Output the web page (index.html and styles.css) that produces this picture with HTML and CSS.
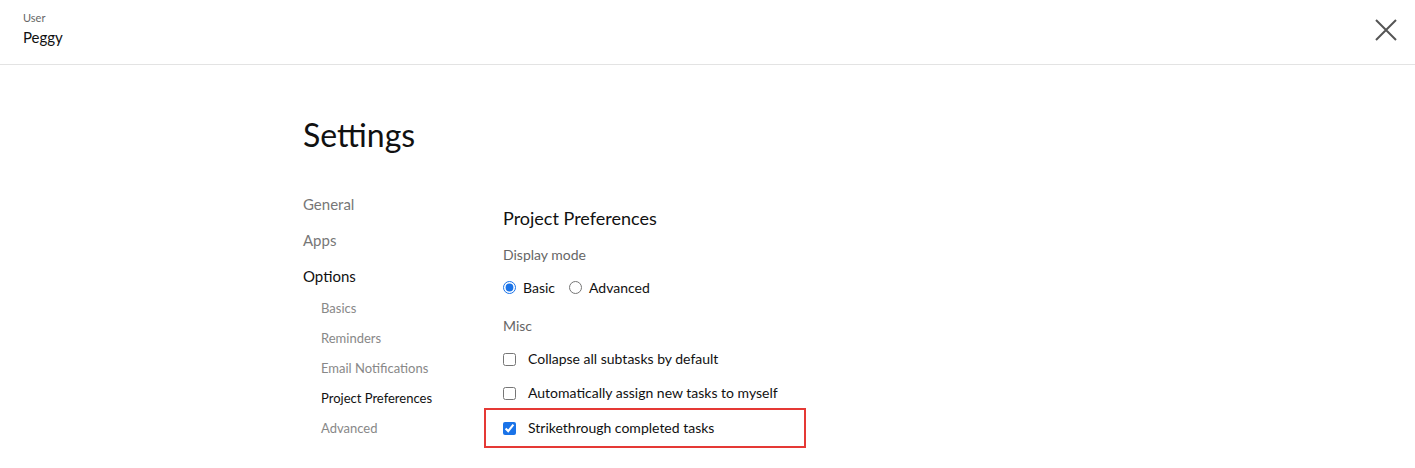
FILE: index.html
```html
<!DOCTYPE html>
<html>
<head>
<meta charset="utf-8">
<link rel="stylesheet" href="styles.css">
</head>
<body>
<header class="topbar">
  <div class="user">
    <div class="user-label">User</div>
    <div class="user-name">Peggy</div>
  </div>
  <button class="close" aria-label="Close">
    <svg width="24" height="24" viewBox="0 0 24 24"><path d="M2 2 L22 22 M22 2 L2 22" stroke="#555" stroke-width="2" fill="none"/></svg>
  </button>
</header>
<main class="page">
  <h1 class="title">Settings</h1>
  <div class="layout">
    <nav class="nav">
      <a class="nav-item">General</a>
      <a class="nav-item">Apps</a>
      <a class="nav-item active">Options</a>
      <div class="subnav">
        <a class="sub-item">Basics</a>
        <a class="sub-item">Reminders</a>
        <a class="sub-item">Email Notifications</a>
        <a class="sub-item active">Project Preferences</a>
        <a class="sub-item">Advanced</a>
      </div>
    </nav>
    <section class="content">
      <h2 class="section-title">Project Preferences</h2>
      <div class="label">Display mode</div>
      <div class="radios">
        <label class="radio"><input type="radio" name="mode" checked> Basic</label>
        <label class="radio"><input type="radio" name="mode"> Advanced</label>
      </div>
      <div class="label misc">Misc</div>
      <label class="check"><input type="checkbox"> Collapse all subtasks by default</label>
      <label class="check"><input type="checkbox"> Automatically assign new tasks to myself</label>
      <label class="check highlight"><input type="checkbox" checked> Strikethrough completed tasks</label>
    </section>
  </div>
</main>
</body>
</html>
```
FILE: styles.css
```css
* { box-sizing: border-box; }
body {
  margin: 0;
  font-family: Lato, "Noto Sans", sans-serif;
  color: #1a1a1a;
  background: #fff;
}
.topbar {
  height: 65px;
  border-bottom: 1px solid #e3e3e3;
  display: flex;
  justify-content: space-between;
  align-items: flex-start;
  padding: 11px 17px 0 23px;
}
.user-label { font-size: 11px; color: #666; line-height: 14px; }
.user-name { font-size: 15px; line-height: 20px; margin-top: 2px; color: #111; }
.close {
  border: 0; background: none; padding: 0; margin-top: 7px; cursor: pointer;
}
.page { padding-left: 303px; }
.title {
  font-size: 32px;
  font-weight: 400;
  margin: 0;
  padding-top: 50px;
  line-height: 40px;
  color: #111;
}
.layout { display: flex; margin-top: 33px; }
.nav { width: 200px; display: flex; flex-direction: column; }
.nav-item { font-size: 15px; line-height: 20px; color: #777; margin-top: 16px; }
.nav-item:first-child { margin-top: 6px; }
.nav-item.active { color: #111; }
.subnav { display: flex; flex-direction: column; padding-left: 18px; margin-top: 1px; }
.sub-item { font-size: 13px; line-height: 18px; color: #888; margin-top: 12px; }
.sub-item.active { color: #111; }
.content { display: flex; flex-direction: column; }
.section-title { font-size: 18px; font-weight: 400; margin: 18px 0 0; line-height: 24px; color: #111; }
.label { font-size: 14px; color: #666; margin-top: 16px; line-height: 18px; }
.radios { display: flex; gap: 14px; margin-top: 15px; font-size: 14px; }
.radio { display: flex; align-items: center; gap: 7px; color: #111; }
.radio input { margin: 0; width: 13px; height: 13px; accent-color: #1a73e8; }
.misc { margin-top: 21px; }
.check {
  display: flex; align-items: center; gap: 12px;
  font-size: 14px; color: #111; line-height: 18px;
  margin-top: 15px;
}
.check + .check { margin-top: 16px; }
.check input { margin: 0; width: 13px; height: 13px; accent-color: #1a73e8; }
.highlight {
  border: 2px solid #e53935;
  margin-left: -19px;
  padding: 9px 0 9px 17px;
  width: 322px;
}
.check + .check.highlight { margin-top: 6px; }
```
